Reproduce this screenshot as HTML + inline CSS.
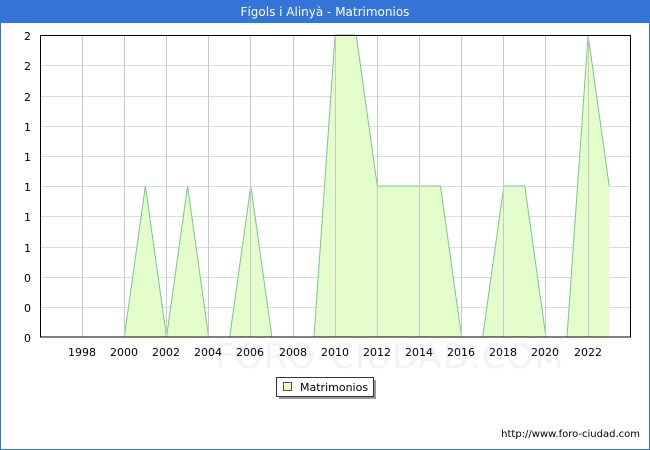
<!DOCTYPE html>
<html><head><meta charset="utf-8"><style>
html,body{margin:0;padding:0;width:650px;height:450px;overflow:hidden;background:#fff;font-family:"DejaVu Sans","Liberation Sans",sans-serif}
</style></head><body>
<svg width="650" height="450" xmlns="http://www.w3.org/2000/svg" font-family="DejaVu Sans, Liberation Sans, sans-serif">
<rect x="0.5" y="0.5" width="649" height="449" fill="#fff" stroke="#3474d6"/>
<rect x="0" y="0" width="650" height="23" fill="#3474d6"/>
<text x="325" y="16" text-anchor="middle" font-size="12" fill="#fff">Fígols i Alinyà - Matrimonios</text>
<text x="390" y="368" text-anchor="middle" font-size="34" fill="#f3f3f8" letter-spacing="1">FORO-CIUDAD.COM</text>
<g stroke="#dcdcdc" stroke-width="1">
<line x1="40" y1="65.5" x2="631" y2="65.5"/><line x1="40" y1="96.5" x2="631" y2="96.5"/><line x1="40" y1="126.5" x2="631" y2="126.5"/><line x1="40" y1="156.5" x2="631" y2="156.5"/><line x1="40" y1="186.5" x2="631" y2="186.5"/><line x1="40" y1="216.5" x2="631" y2="216.5"/><line x1="40" y1="247.5" x2="631" y2="247.5"/><line x1="40" y1="277.5" x2="631" y2="277.5"/><line x1="40" y1="307.5" x2="631" y2="307.5"/>
</g>
<polygon fill="#e3fdcb" points="124.3,337 145.4,186 166.5,337 187.6,186 208.6,337 229.7,337 250.8,186 271.9,337 293,337 314,337 335.1,35 356.2,35 377.3,186 398.4,186 419.4,186 440.5,186 461.6,337 482.7,337 503.8,186 524.8,186 545.9,337 567,337 588.1,35 609.2,186 609.2,337"/>
<polyline fill="none" stroke="#7cc48e" stroke-width="1" points="124.3,337 145.4,186 166.5,337 187.6,186 208.6,337 229.7,337 250.8,186 271.9,337 293,337 314,337 335.1,35 356.2,35 377.3,186 398.4,186 419.4,186 440.5,186 461.6,337 482.7,337 503.8,186 524.8,186 545.9,337 567,337 588.1,35 609.2,186"/>
<g stroke="#c8c8c8" stroke-width="1">
<line x1="82.5" y1="35" x2="82.5" y2="337"/><line x1="124.5" y1="35" x2="124.5" y2="337"/><line x1="166.5" y1="35" x2="166.5" y2="337"/><line x1="208.5" y1="35" x2="208.5" y2="337"/><line x1="250.5" y1="35" x2="250.5" y2="337"/><line x1="293.5" y1="35" x2="293.5" y2="337"/><line x1="335.5" y1="35" x2="335.5" y2="337"/><line x1="377.5" y1="35" x2="377.5" y2="337"/><line x1="419.5" y1="35" x2="419.5" y2="337"/><line x1="461.5" y1="35" x2="461.5" y2="337"/><line x1="503.5" y1="35" x2="503.5" y2="337"/><line x1="545.5" y1="35" x2="545.5" y2="337"/><line x1="588.5" y1="35" x2="588.5" y2="337"/>
</g>
<rect x="40.5" y="35.5" width="590" height="301.5" fill="none" stroke="#000" stroke-width="1"/>
<g font-size="11" fill="#000" text-anchor="end">
<text x="31" y="40">2</text><text x="31" y="70">2</text><text x="31" y="101">2</text><text x="31" y="131">1</text><text x="31" y="161">1</text><text x="31" y="191">1</text><text x="31" y="221">1</text><text x="31" y="252">1</text><text x="31" y="282">0</text><text x="31" y="312">0</text><text x="31" y="342">0</text>
</g>
<g font-size="11" fill="#000" text-anchor="middle">
<text x="82" y="356">1998</text><text x="124" y="356">2000</text><text x="166" y="356">2002</text><text x="208" y="356">2004</text><text x="250" y="356">2006</text><text x="293" y="356">2008</text><text x="335" y="356">2010</text><text x="377" y="356">2012</text><text x="419" y="356">2014</text><text x="461" y="356">2016</text><text x="503" y="356">2018</text><text x="545" y="356">2020</text><text x="588" y="356">2022</text>
</g>
<rect x="279" y="380" width="97" height="19" fill="#999"/>
<rect x="276.5" y="377.5" width="97" height="19" fill="#fff" stroke="#333"/>
<rect x="283.5" y="382.5" width="8" height="8" fill="#e3fdcb" stroke="#555"/>
<text x="300" y="391" font-size="11" fill="#000">Matrimonios</text>
<text x="640" y="437" font-size="10" fill="#000" text-anchor="end">http://www.foro-ciudad.com</text>
</svg>
</body></html>
